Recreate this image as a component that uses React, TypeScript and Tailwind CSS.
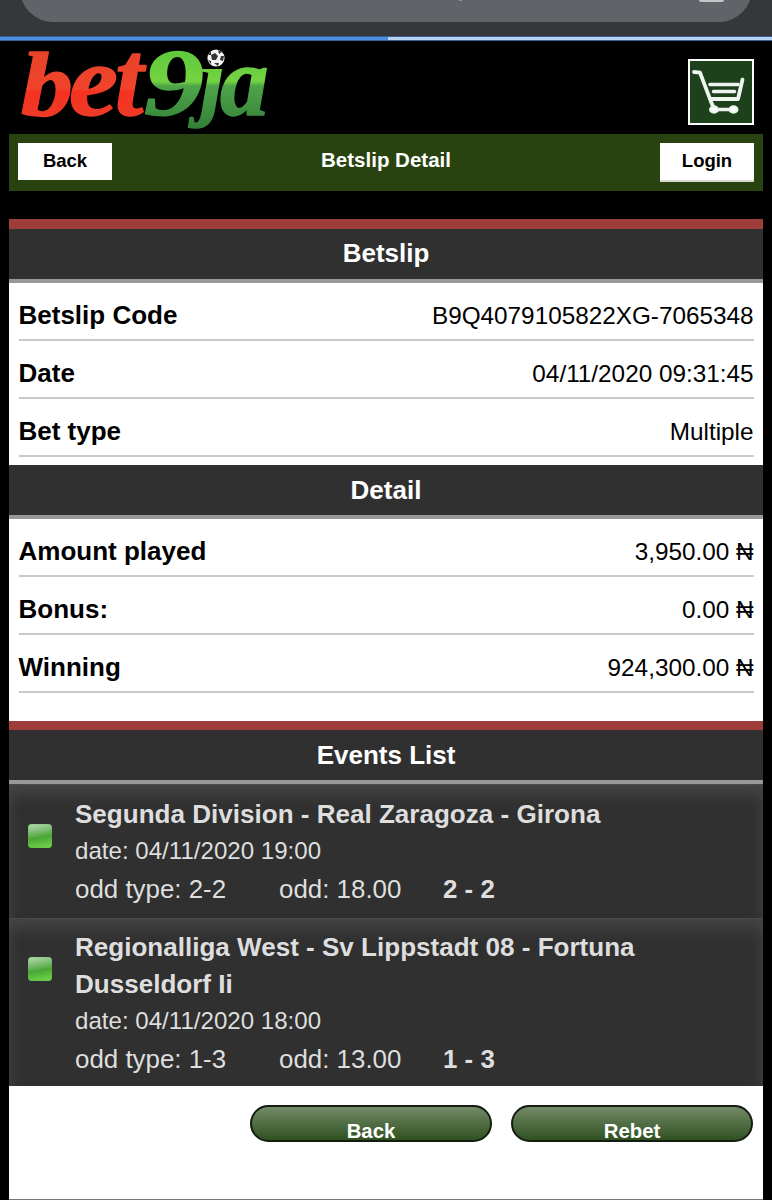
import { ReactNode } from "react";
import clsx from "clsx";

const slipRows = [
  { label: "Betslip Code", value: "B9Q4079105822XG-7065348" },
  { label: "Date", value: "04/11/2020 09:31:45" },
  { label: "Bet type", value: "Multiple" },
];

const detailRows = [
  { label: "Amount played", value: "3,950.00 ₦" },
  { label: "Bonus:", value: "0.00 ₦" },
  { label: "Winning", value: "924,300.00 ₦" },
];

const events = [
  {
    name: "Segunda Division - Real Zaragoza - Girona",
    date: "04/11/2020 19:00",
    type: "2-2",
    odd: "18.00",
    score: "2 - 2",
  },
  {
    name: "Regionalliga West - Sv Lippstadt 08 - Fortuna Dusseldorf Ii",
    date: "04/11/2020 18:00",
    type: "1-3",
    odd: "13.00",
    score: "1 - 3",
  },
];

const Logo = () => (
  <svg width="260" height="92" viewBox="0 0 260 92" className="block overflow-visible">
    <defs>
      <linearGradient id="red" x1="0" y1="-62" x2="0" y2="0" gradientUnits="userSpaceOnUse">
        <stop offset="0" stopColor="#e8432a" />
        <stop offset="0.58" stopColor="#f0442b" />
        <stop offset="0.62" stopColor="#f63222" />
        <stop offset="1" stopColor="#ee3a26" />
      </linearGradient>
      <linearGradient id="green" x1="0" y1="-64" x2="0" y2="12" gradientUnits="userSpaceOnUse">
        <stop offset="0" stopColor="#5fc93c" />
        <stop offset="0.4" stopColor="#74d342" />
        <stop offset="0.46" stopColor="#4da548" />
        <stop offset="1" stopColor="#34803a" />
      </linearGradient>
      <clipPath id="stem">
        <rect x="-20" y="-46" width="80" height="80" />
      </clipPath>
    </defs>
    <g fontFamily="'Liberation Serif', serif" fontWeight="700" fontStyle="italic" strokeWidth="1.5" strokeLinejoin="round">
      <g fill="url(#red)" stroke="url(#red)">
        <text transform="translate(6 74) scale(1.14 1)" fontSize="91">b</text>
        <text transform="translate(54 74) scale(1.08 1)" fontSize="102">e</text>
        <text transform="translate(100 74) scale(0.95 1)" fontSize="108">t</text>
      </g>
      <g fill="url(#green)" stroke="url(#green)">
        <text transform="translate(129 74) scale(1.26 1)" fontSize="95">9</text>
        <g transform="translate(185 74)" clipPath="url(#stem)">
          <text fontSize="88" y="-6">j</text>
        </g>
        <text transform="translate(205 74) scale(0.98 1)" fontSize="99">a</text>
      </g>
    </g>
    {/* football over the j */}
    <circle cx="201" cy="17" r="10" fill="#000" />
    <circle cx="201" cy="17" r="8.6" fill="#f4f4f4" />
    <path d="M196 14l4 -2 3 3 -2 4 -4 0z M193 14l3 -4 0 4z M203 9l4 2 -3 2z M206 15l3 0 -1 5 -3 -1z M199 22l5 0 -1 3z M193 19l3 1 0 3z" fill="#333" />
  </svg>
);

const CartIcon = () => (
  <svg width="62" height="62" viewBox="0 0 62 62" className="block" fill="none" stroke="#edf5ee" strokeLinecap="round" strokeLinejoin="round">
    <path d="M4 11l6 .7 11 29 3 7" strokeWidth="3.8" />
    <path d="M20.5 38h27.5l4.5 -19.5" strokeWidth="3.8" />
    <path d="M20 23.5h28M23.500 30.500h21" strokeWidth="3.6" />
    <path d="M24 48.5h19" strokeWidth="3.4" />
    <ellipse cx="24" cy="48.5" rx="3.8" ry="3" fill="#fff" strokeWidth="2.4" />
    <ellipse cx="43.5" cy="48.5" rx="3.8" ry="3" fill="#fff" strokeWidth="2.4" />
  </svg>
);

const SectionTitle = ({ children, className }: { children: ReactNode; className?: string }) => (
  <h2
    className={clsx(
      "flex h-[54px] items-center justify-center border-b-4 border-[#999] bg-[#303030] text-[26px] font-bold text-white",
      className
    )}
  >
    {children}
  </h2>
);

const Rows = ({ rows }: { rows: { label: string; value: string }[] }) => (
  <div className="px-[9.5px]">
    {rows.map((row) => (
      <div
        key={row.label}
        className="flex h-[58px] items-end justify-between border-b-2 border-[#c9c9c9] pb-[9px]"
      >
        <span className="text-[26px] leading-[30px] font-bold">{row.label}</span>
        <span className="text-[24.3px] leading-[28px]">{row.value}</span>
      </div>
    ))}
  </div>
);

const EventItem = ({ event, last }: { event: (typeof events)[number]; last: boolean }) => (
  <div
    className={clsx(
      "flex border-t border-[#4a4a4a] bg-[#303030] pr-10 pl-[19px] text-[#dedede] shadow-[inset_0_20px_18px_-12px_#484848,inset_14px_0_14px_-12px_#404040,inset_-14px_0_14px_-12px_#404040]",
      last ? "pt-[10px] pb-[7px]" : "pt-[11px] pb-[9px]"
    )}
  >
    <div className="mt-[28px] h-6 w-6 shrink-0 rounded-[4px] bg-linear-170 from-[#b0d6ac] from-5% via-[#4aa636] via-55% to-[#74db4c] shadow-[inset_0_0_2px_#5dbb46]" />
    <div className="ml-[23px]">
      <h3 className="text-[26.05px] leading-[37px] font-bold">{event.name}</h3>
      <p className="text-[24.1px] leading-[36px]">date: {event.date}</p>
      <div className="flex pt-px text-[25.9px] leading-[39px]">
        <span className="w-[204px]">odd type: {event.type}</span>
        <span className="w-[164px]">odd: {event.odd}</span>
        <b>{event.score}</b>
      </div>
    </div>
  </div>
);

const PillButton = ({ children }: { children: ReactNode }) => (
  <button className="flex h-[37px] w-[242px] items-end justify-center overflow-hidden rounded-full border-2 border-[#141c10] bg-linear-to-b from-[#748b68] to-[#2f5120] text-[20.4px] leading-[18px] font-bold text-white">
    {children}
  </button>
);

const App = () => {
  return (
    <div className="h-[1200px] w-[772px] overflow-hidden bg-black font-['Liberation_Sans',Arial,sans-serif] text-black">
      <div className="flex h-9 items-start overflow-hidden bg-[#36373b] px-[20px]">
        <div className="-mt-[44px] flex h-[66px] grow items-start justify-end rounded-full bg-[#606367] pt-[44px] pr-[28px]">
          <div className="mr-[237px] h-px w-[3px] bg-[#8b8e92]" />
          <div className="h-[2px] w-[25px] rounded-b bg-[#c4c6c9]" />
        </div>
      </div>
      <div className="flex h-[5px] border-y border-[#39618f] bg-[#b7d5f3]">
        <div className="w-[388px] bg-[#4b8fe0]" />
      </div>

      <div className="flex h-[93px] justify-between pr-[18px] pl-[15px]">
        <Logo />
        <div className="mt-[18px] h-[66px] w-[66px] border-2 border-white bg-[#1c411b]">
          <CartIcon />
        </div>
      </div>

      <div className="mx-[9px]">
        <div className="flex h-[57px] items-start justify-between bg-[#28430f] px-[9px] pt-[9px]">
          <button className="h-[37px] w-[94px] bg-white pb-[2px] text-[18.5px] font-bold">Back</button>
          <h1 className="pt-[5px] text-[20.5px] leading-6 font-bold text-white">Betslip Detail</h1>
          <button className="h-[39px] w-[94px] border-b-2 border-[#d6dbd0] bg-white pb-[2px] text-[18.5px] font-bold">
            Login
          </button>
        </div>

        <div className="mt-7 border-t-[10px] border-[#9e3d39] bg-white">
          <SectionTitle className="pb-[2px]">Betslip</SectionTitle>
          <Rows rows={slipRows} />
          <div className="h-2" />
          <SectionTitle>Detail</SectionTitle>
          <Rows rows={detailRows} />
          <div className="h-7" />
        </div>

        <div className="border-t-[9px] border-[#9e3d39] bg-white">
          <SectionTitle>Events List</SectionTitle>
          {events.map((event, index) => (
            <EventItem key={event.name} event={event} last={index === events.length - 1} />
          ))}
          <div className="flex h-[114px] justify-end gap-[19px] border-b border-[#777] pt-[19px] pr-[10px]">
            <PillButton>Back</PillButton>
            <PillButton>Rebet</PillButton>
          </div>
        </div>
      </div>
    </div>
  );
};

export default App;
